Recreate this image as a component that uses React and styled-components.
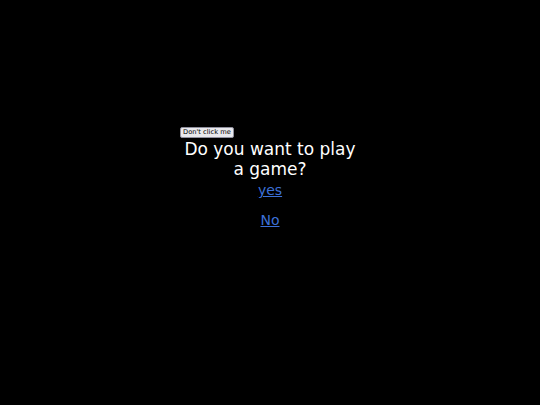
import React from 'react'
import styled, { createGlobalStyle } from 'styled-components'

const GlobalStyle = createGlobalStyle`
    html, body {
        margin: 0;
        background: #000;
        font-family: "DejaVu Sans", sans-serif;
    }
`

const Page = styled.div`
    min-height: 405px;
    display: flex;
    justify-content: center;
`

const Box = styled.div`
    width: 180px;
    margin-top: 127px;
    display: flex;
    flex-direction: column;
    align-items: center;
`

const Button = styled.button`
    align-self: flex-start;
    font-family: "DejaVu Sans", sans-serif;
    font-size: 6.7px;
    color: #000;
    background: #e9e9ed;
    border: 1px solid #8f8f9d;
    border-radius: 2px;
    padding: 1px 2px;
    line-height: 7px;
`

const Title = styled.h1`
    margin: 1px 0 0;
    color: #fff;
    font-size: 17px;
    font-weight: normal;
    line-height: 20px;
    text-align: center;
`

const Choice = styled.a`
    display: block;
    margin-top: ${({ first }) => (first ? '3px' : '14px')};
    color: #3c70d8;
    font-size: 14px;
    line-height: 16px;
    text-decoration: underline;
    cursor: pointer;
`

export default function App() {
    return (
        <>
            <GlobalStyle />
            <Page>
                <Box>
                    <Button>Don't click me</Button>
                    <Title>Do you want to play a game?</Title>
                    <Choice first href="#">yes</Choice>
                    <Choice href="#">No</Choice>
                </Box>
            </Page>
        </>
    )
}
